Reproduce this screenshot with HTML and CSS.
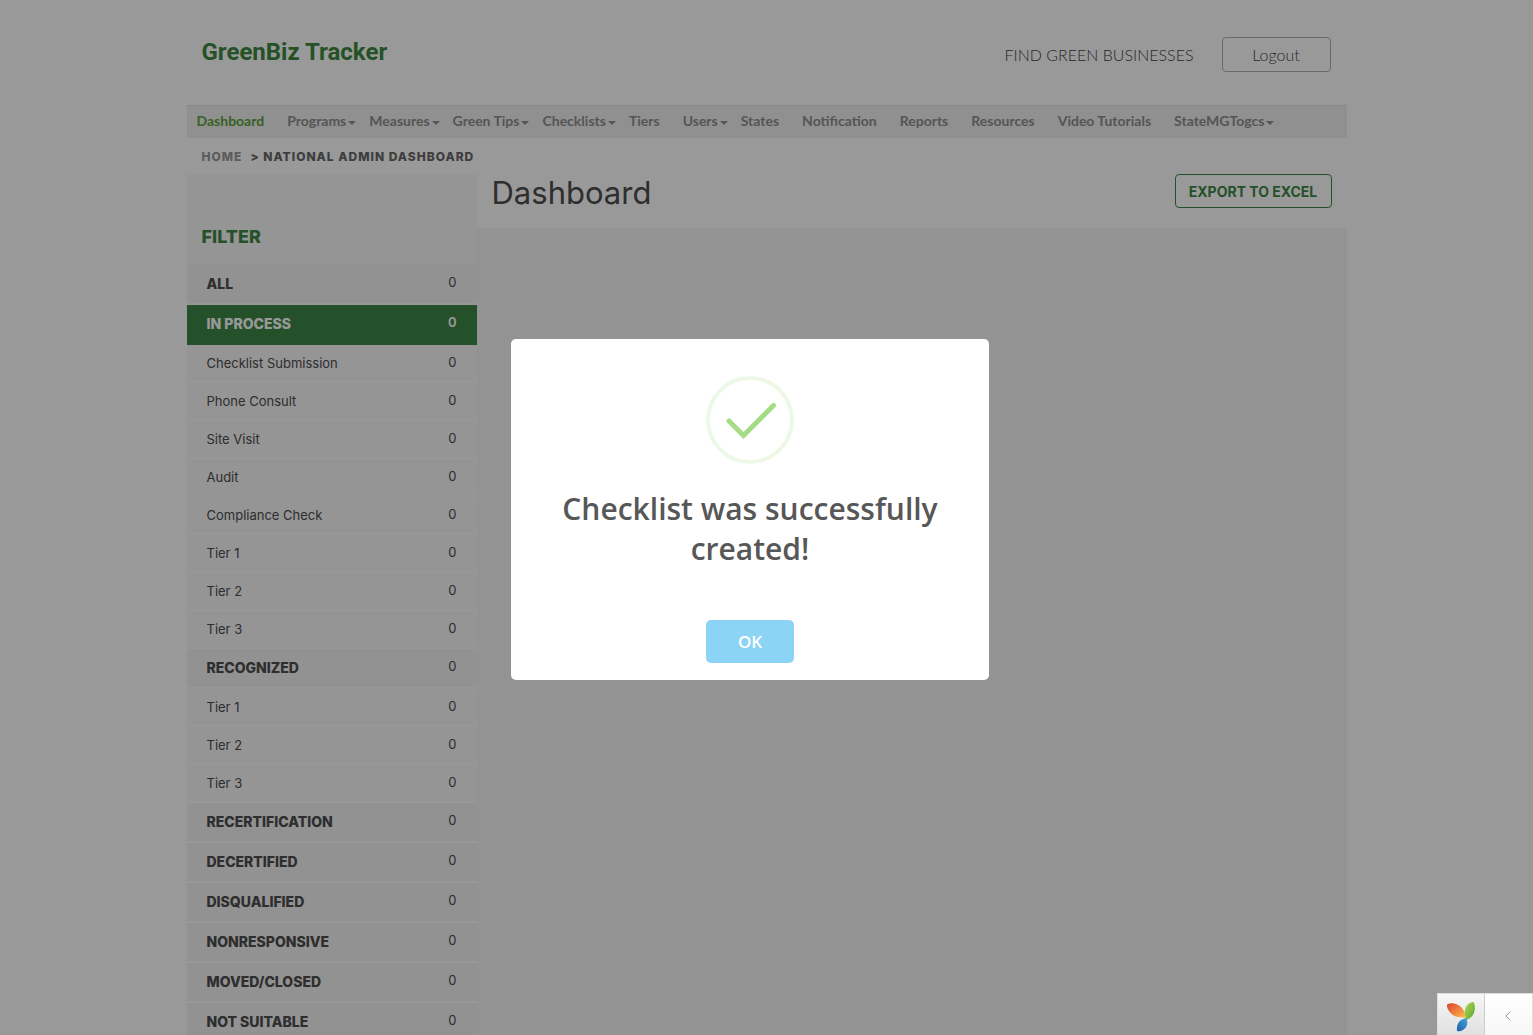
FILE: index.html
```html
<!DOCTYPE html>
<html lang="en">
<head>
<meta charset="utf-8">
<meta name="viewport" content="width=device-width, initial-scale=1">
<title>GreenBiz Tracker</title>
<link rel="stylesheet" href="styles.css">
</head>
<body>
<div class="container">
  <header class="header">
    <a class="logo" href="#">GreenBiz Tracker</a>
    <div class="header-links">
      <a class="find" href="#">FIND GREEN BUSINESSES</a>
      <button class="logout" type="button">Logout</button>
    </div>
  </header>
  <nav class="nav">
    <a class="nav-item active" href="#">Dashboard</a>
    <a class="nav-item dropdown" href="#">Programs</a>
    <a class="nav-item dropdown" href="#">Measures</a>
    <a class="nav-item dropdown" href="#">Green Tips</a>
    <a class="nav-item dropdown" href="#">Checklists</a>
    <a class="nav-item" href="#">Tiers</a>
    <a class="nav-item dropdown" href="#">Users</a>
    <a class="nav-item" href="#">States</a>
    <a class="nav-item" href="#">Notification</a>
    <a class="nav-item" href="#">Reports</a>
    <a class="nav-item" href="#">Resources</a>
    <a class="nav-item" href="#">Video Tutorials</a>
    <a class="nav-item dropdown" href="#">StateMGTogcs</a>
  </nav>
  <div class="breadcrumb"><a href="#">HOME</a><span>&gt; NATIONAL ADMIN DASHBOARD</span></div>
  <div class="columns">
    <aside class="sidebar">
      <h2 class="filter-title">FILTER</h2>
      <ul class="filters">
        <li><a class="row group" href="#"><span>ALL</span><span class="count">0</span></a></li>
        <li><a class="row group selected" href="#"><span>IN PROCESS</span><span class="count">0</span></a></li>
        <li><a class="row" href="#"><span>Checklist Submission</span><span class="count">0</span></a></li>
        <li><a class="row" href="#"><span>Phone Consult</span><span class="count">0</span></a></li>
        <li><a class="row" href="#"><span>Site Visit</span><span class="count">0</span></a></li>
        <li><a class="row" href="#"><span>Audit</span><span class="count">0</span></a></li>
        <li><a class="row" href="#"><span>Compliance Check</span><span class="count">0</span></a></li>
        <li><a class="row" href="#"><span>Tier 1</span><span class="count">0</span></a></li>
        <li><a class="row" href="#"><span>Tier 2</span><span class="count">0</span></a></li>
        <li><a class="row" href="#"><span>Tier 3</span><span class="count">0</span></a></li>
        <li><a class="row group" href="#"><span>RECOGNIZED</span><span class="count">0</span></a></li>
        <li><a class="row" href="#"><span>Tier 1</span><span class="count">0</span></a></li>
        <li><a class="row" href="#"><span>Tier 2</span><span class="count">0</span></a></li>
        <li><a class="row" href="#"><span>Tier 3</span><span class="count">0</span></a></li>
        <li><a class="row group" href="#"><span>RECERTIFICATION</span><span class="count">0</span></a></li>
        <li><a class="row group" href="#"><span>DECERTIFIED</span><span class="count">0</span></a></li>
        <li><a class="row group" href="#"><span>DISQUALIFIED</span><span class="count">0</span></a></li>
        <li><a class="row group" href="#"><span>NONRESPONSIVE</span><span class="count">0</span></a></li>
        <li><a class="row group" href="#"><span>MOVED/CLOSED</span><span class="count">0</span></a></li>
        <li><a class="row group" href="#"><span>NOT SUITABLE</span><span class="count">0</span></a></li>
      </ul>
    </aside>
    <main class="main">
      <div class="main-head">
        <h1>Dashboard</h1>
        <button class="export" type="button">EXPORT TO EXCEL</button>
      </div>
    </main>
  </div>
</div>

<div class="overlay">
  <div class="modal" role="dialog" aria-modal="true" aria-labelledby="modal-title">
    <svg class="success" viewBox="0 0 88 88" aria-hidden="true">
      <circle cx="44" cy="44" r="42" fill="none" stroke="#edf8e7" stroke-width="4"/>
      <path d="M23 45 37.500 59.500 67.500 29.500" fill="none" stroke="#a5dc86" stroke-width="5" stroke-linecap="round"/>
    </svg>
    <h2 id="modal-title">Checklist was successfully created!</h2>
    <button class="ok" type="button">OK</button>
  </div>
</div>

<div class="debug-bar">
  <a class="debug-logo" href="#" aria-label="Debugger">
    <svg viewBox="0 0 30 32" aria-hidden="true">
      <defs>
        <linearGradient id="orange" x1="0" y1="0" x2="1" y2="1"><stop offset="0" stop-color="#d9432f"/><stop offset=".5" stop-color="#ef7f3d"/><stop offset="1" stop-color="#fbc34a"/></linearGradient>
        <linearGradient id="green" x1="0" y1="0" x2="1" y2="1"><stop offset="0" stop-color="#b5dc50"/><stop offset="1" stop-color="#55a23a"/></linearGradient>
        <linearGradient id="blue" x1="0" y1="1" x2="1" y2="0"><stop offset="0" stop-color="#1c5fab"/><stop offset="1" stop-color="#42a5dc"/></linearGradient>
      </defs>
      <path d="M1 3.500C5 1 11 2 15 6C18.500 9.500 19.500 13 19.500 17C16 16 10 17 5.500 13C2 10 .5 6 1 3.500Z" fill="url(#orange)"/>
      <path d="M27.500 1C30.500 7 29 16 20.500 19C19 15 17.500 10 20.500 5C22.500 2 25 1 27.500 1Z" fill="url(#green)"/>
      <path d="M20 17C22.500 21 21.500 26 17 29C15 30.300 12.500 30.500 11 30C10.500 24 12 19 20 17Z" fill="url(#blue)"/>
    </svg>
  </a>
  <button class="debug-toggle" type="button" aria-label="Expand">
    <svg viewBox="0 0 6 10" aria-hidden="true"><path d="M5.500.5 1 5 5.500 9.500" fill="none" stroke="#999"/></svg>
  </button>
</div>
</body>
</html>
```
FILE: styles.css
```css
* { box-sizing: border-box; }

body {
  margin: 0;
  height: 100vh;
  overflow: hidden;
  background: #fff;
  color: #4d4d4d;
  font-family: Inter, "Open Sans", sans-serif;
  font-size: 13px;
}

a { color: inherit; text-decoration: none; }
button { font: inherit; cursor: pointer; }

.container {
  max-width: 1160px;
  margin: 0 auto;
}

.header {
  display: flex;
  justify-content: space-between;
  align-items: center;
  height: 105px;
  padding: 4px 16px 0 15px;
}
.logo {
  padding-bottom: 6px;
  color: #3e8840;
  font-family: Roboto, sans-serif;
  font-size: 24px;
  font-weight: 700;
}
.header-links {
  display: flex;
  align-items: center;
  gap: 28px;
  font-family: Lato, sans-serif;
  font-size: 16px;
  font-weight: 300;
  color: #444;
}
.logout {
  width: 109px;
  height: 35px;
  border: 1px solid #b0b0b0;
  border-radius: 4px;
  background: #fff;
  color: #444;
}

.nav {
  display: flex;
  gap: 1px;
  height: 33px;
  border-top: 1px solid #e4e4e4;
  background: #f0f0f0;
  color: #8e8e8e;
  font-family: Lato, sans-serif;
  font-size: 14px;
  font-weight: 700;
  line-height: 30px;
  white-space: nowrap;
}
.nav-item { padding: 0 12px 0 10px; }
.nav-item.active { color: #5da33c; }
.nav-item.dropdown { display: flex; align-items: flex-start; gap: 2px; padding-right: 2px; }
.dropdown::after {
  content: "";
  margin-top: 15px;
  border: 4px solid transparent;
  border-top-color: currentColor;
  border-bottom: 0;
}

.breadcrumb {
  display: flex;
  gap: 8px;
  height: 36px;
  padding-left: 15px;
  color: #666;
  font-size: 12px;
  font-weight: 800;
  letter-spacing: 1px;
  line-height: 37px;
}
.breadcrumb a { color: #999; }

.columns { display: flex; background: #f6f6f6; }
.sidebar { width: 290px; flex: none; background: #f8f8f8; }
.filter-title {
  margin: 0;
  padding: 50px 15px 15px;
  color: #3e8846;
  font-size: 18px;
  font-weight: 800;
  line-height: 26px;
}
.filters { list-style: none; margin: 0; padding: 0; }
.row {
  display: flex;
  justify-content: space-between;
  height: 38px;
  padding: 0 20px;
  border-bottom: 2px solid #fdfdfd;
  line-height: 36px;
}
.group {
  height: 40px;
  background: #f3f3f3;
  font-size: 14px;
  font-weight: 800;
  line-height: 38px;
}
.count { font-size: 13px; font-weight: 400; line-height: 35px; }
.selected { background: #3e8846; border-color: #3e8846; color: #fff; }
.selected .count { font-weight: 600; }

.main { flex: 1; }
.main-head {
  display: flex;
  justify-content: space-between;
  align-items: flex-start;
  height: 54px;
  padding: 0 15px;
  background: #fff;
}
h1 { margin: 0; font-size: 31px; font-weight: 400; line-height: 38px; }
.export {
  width: 157px;
  height: 34px;
  padding: 0;
  border: 1px solid #3e8846;
  border-radius: 4px;
  background: #fff;
  color: #3e8846;
  font-size: 14px;
  font-weight: 700;
}

.overlay {
  position: fixed;
  inset: 0;
  display: flex;
  align-items: center;
  justify-content: center;
  padding: 0 33px 16px 0;
  background: rgba(0, 0, 0, .4);
}
.modal {
  display: flex;
  flex-direction: column;
  align-items: center;
  width: 478px;
  padding: 37px 17px 17px;
  border-radius: 5px;
  background: #fff;
  color: #575757;
  font-family: "Open Sans", sans-serif;
  text-align: center;
}
.success { width: 88px; height: 88px; }
.modal h2 { margin: 25px 0 51px; font-size: 30px; font-weight: 600; line-height: 40px; }
.ok {
  width: 88px;
  height: 43px;
  border: 0;
  border-radius: 5px;
  background: #8cd4f5;
  color: #fff;
  font-size: 17px;
  font-weight: 600;
}

.debug-bar {
  position: fixed;
  right: 0;
  bottom: 0;
  display: flex;
  width: 96px;
  height: 42px;
  border: 1px solid #ddd;
  border-bottom: 0;
}
.debug-logo {
  display: flex;
  align-items: center;
  justify-content: center;
  width: 47px;
  padding-top: 4px;
  border-right: 1px solid #ccc;
  background: linear-gradient(#f7f7f7, #e0e0e0);
}
.debug-logo svg { width: 30px; height: 32px; }
.debug-toggle {
  display: flex;
  flex: 1;
  align-items: center;
  justify-content: center;
  padding: 2px 2px 0 0;
  border: 0;
  background: linear-gradient(#fff, #f7f7f7);
}
.debug-toggle svg { width: 6px; height: 10px; }
```
